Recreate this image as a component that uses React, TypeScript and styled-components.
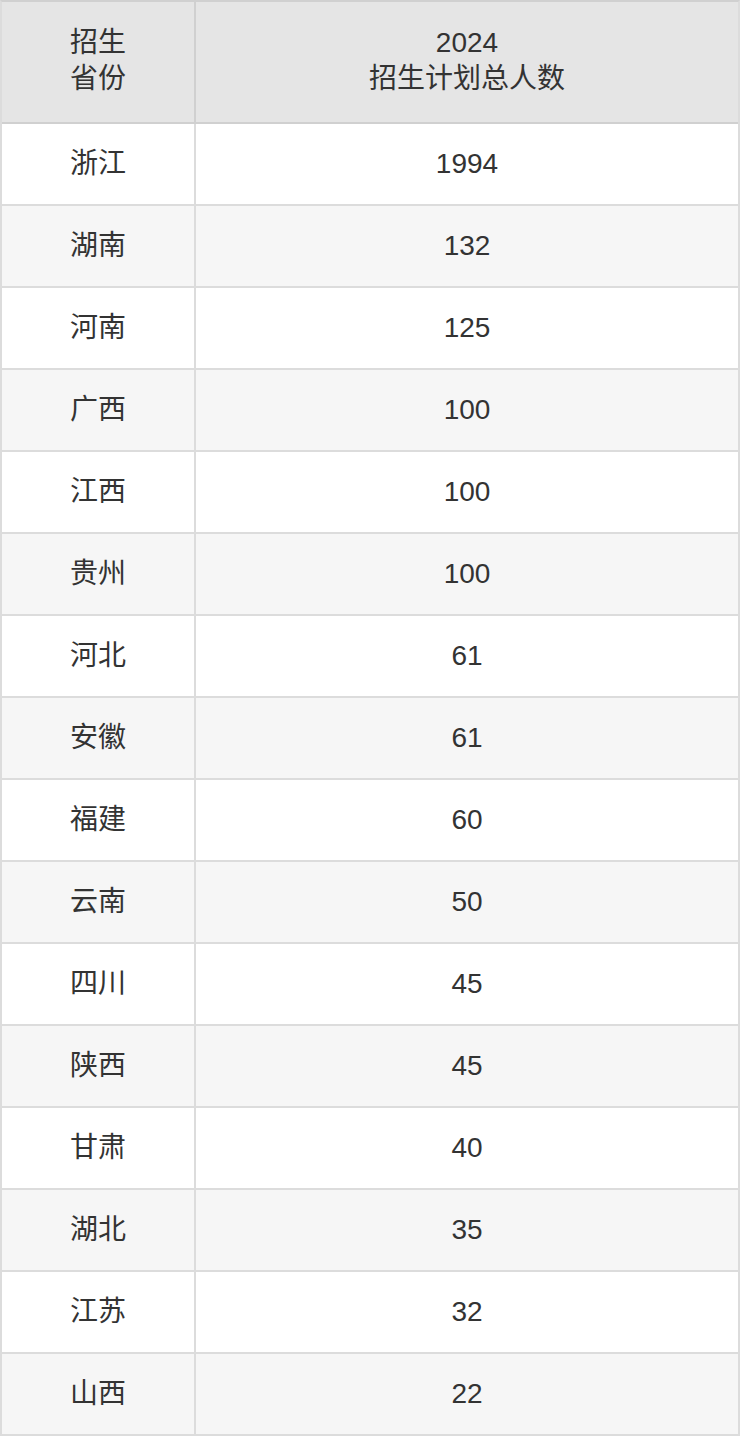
import React from "react";
import styled, { createGlobalStyle } from "styled-components";

const Global = createGlobalStyle`
  html, body { margin: 0; padding: 0; background: #fff; }
  body { font-family: "Helvetica Neue", "Liberation Sans", Arial, "Noto Sans CJK SC", sans-serif; }
`;

const Table = styled.div`
  width: 740px;
  box-sizing: border-box;
  border: 2px solid #dcdcdc;
  border-top-color: #d0d0d0;
  color: #333;
  font-size: 28px;
  line-height: 36px;
`;

const Row = styled.div<{ $bg: string; $head?: boolean }>`
  display: grid;
  grid-template-columns: 194px 1fr;
  background: ${(p) => p.$bg};
  height: ${(p) => (p.$head ? "122px" : "82px")};
  box-sizing: border-box;
  border-bottom: 2px solid ${(p) => (p.$head ? "#d0d0d0" : "#dcdcdc")};
  &:last-child { border-bottom: none; height: 80px; }
`;

const Cell = styled.div<{ $first?: boolean; $head?: boolean }>`
  display: flex;
  align-items: center;
  justify-content: center;
  text-align: center;
  padding-bottom: ${(p) => (p.$head ? "3px" : "0")};
  border-right: ${(p) => (p.$first ? `2px solid ${p.$head ? "#d0d0d0" : "#dcdcdc"}` : "none")};
`;

const data: [string, string][] = [
  ["浙江", "1994"],
  ["湖南", "132"],
  ["河南", "125"],
  ["广西", "100"],
  ["江西", "100"],
  ["贵州", "100"],
  ["河北", "61"],
  ["安徽", "61"],
  ["福建", "60"],
  ["云南", "50"],
  ["四川", "45"],
  ["陕西", "45"],
  ["甘肃", "40"],
  ["湖北", "35"],
  ["江苏", "32"],
  ["山西", "22"],
];

export default function App() {
  return (
    <>
      <Global />
      <Table>
        <Row $bg="#e5e5e5" $head>
          <Cell $first $head>
            招生
            <br />
            省份
          </Cell>
          <Cell $head>
            2024
            <br />
            招生计划总人数
          </Cell>
        </Row>
        {data.map(([p, n], i) => (
          <Row key={p + i} $bg={i % 2 === 0 ? "#ffffff" : "#f6f6f6"}>
            <Cell $first>{p}</Cell>
            <Cell>{n}</Cell>
          </Row>
        ))}
      </Table>
    </>
  );
}
